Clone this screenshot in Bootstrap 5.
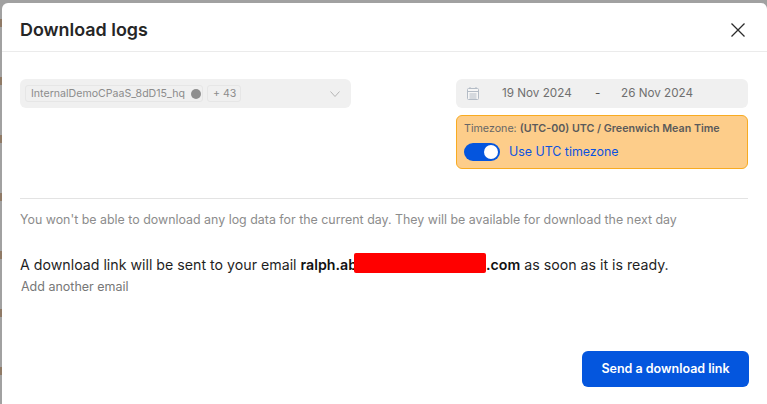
<!DOCTYPE html>
<html lang="en">
<head>
    <meta charset="UTF-8">
    <meta name="viewport" content="width=device-width, initial-scale=1.0">
    <title>Download logs</title>
    <link href="https://cdn.jsdelivr.net/npm/bootstrap@5.3.0/dist/css/bootstrap.min.css" rel="stylesheet">
    <style>
        html, body { height: 404px; overflow: hidden; }
        body { background: repeating-linear-gradient(180deg, #a1a1a1 0 19px, #8f7a66 19px 27px, #a1a1a1 27px 58px); font-family: Inter, "Liberation Sans", sans-serif; padding: 3px 0 0 2px; color: #1d1d1d; }
        .logs-modal { height: 401px; background: #fff; border: 0; border-radius: 6px 6px 0 0; }
        .logs-head { height: 49px; padding: 6px 21px 0 18px; border-bottom: 1px solid #ebebeb; }
        .logs-title { font-size: 17.9px; font-weight: 600; color: #262626; }
        .logs-close { padding: 0; border: 0; background: none; width: 16px; height: 16px; line-height: 0; }
        .logs-body { padding: 27px 18px 0; }
        .app-select { width: 331px; height: 29px; background: #f0f0f0; border-radius: 6px; padding: 0 11px 0 5px; }
        .app-chip { height: 17px; border: 1px solid #e6e6e6; border-radius: 3px; font-size: 10.6px; color: #8c8c8c; padding: 0 4px 0 5px; line-height: 15px; }
        .chip-x { width: 10px; height: 10px; border-radius: 50%; background: #8f8f8f; margin-left: 6px; margin-right: -3px; }
        .date-col { width: 292px; margin-right: 1px; }
        .date-box { height: 29px; background: #f0f0f0; border-radius: 6px; font-size: 11.7px; color: #6f6f6f; padding: 0 0 0 11px; }
        .date-from { margin-left: 23px; width: 93px; }
        .date-dash { width: 26px; color: #555; }
        .tz-box { height: 54px; margin-top: 7px; background: #fdcd8a; border: 1px solid #f8ab21; border-radius: 6px; padding: 5px 7px; font-size: 10.7px; color: #666; }
        .tz-box b { font-weight: 600; color: #5a5a5a; }
        .utc-row { margin-top: 6px; font-size: 12.4px; color: #0a53e0; gap: 9px; }
        .utc-toggle { width: 36px; height: 18px; background: #0455de; border-radius: 9px; padding: 2px; }
        .utc-knob { width: 14px; height: 14px; background: #fff; border-radius: 50%; margin-left: auto; }
        .logs-rule { margin: 29px 1px 0 0; border-top: 1px solid #e3e3e3; opacity: 1; }
        .logs-note { font-size: 12.42px; color: #8c8c8c; margin-top: 12px; }
        .logs-link-text { font-size: 14.2px; color: #1f1f1f; margin-top: 25px; line-height: 20px; white-space: nowrap; }
        .logs-link-text b { font-weight: 600; color: #111; }
        .redact { display: inline-block; width: 132px; height: 20px; background: #ff0000; border-radius: 2px; vertical-align: top; margin: -2px 0 0 -3px; }
        .add-email { font-size: 12.5px; color: #777; margin: 3px 0 0 1px; }
        .send-btn { height: 36px; width: 167px; background: #0456de; border: 0; border-radius: 6px; color: #fff; font-size: 12.5px; font-weight: 600; padding: 0; }
        .logs-foot { padding: 0 18px 17px 0; }
    </style>
</head>
<body>
    <div class="modal-content logs-modal d-flex flex-column">
        <div class="logs-head d-flex align-items-center justify-content-between">
            <div class="logs-title">Download logs</div>
            <button type="button" class="logs-close" aria-label="Close">
                <svg width="16" height="16" viewBox="0 0 16 16" fill="none" stroke="#2b2b2b" stroke-width="1.3"><path d="M1.500 1.500l13 13M14.500 1.500l-13 13"/></svg>
            </button>
        </div>
        <div class="logs-body flex-grow-1">
            <div class="d-flex justify-content-between align-items-start">
                <div class="app-select d-flex align-items-center">
                    <span class="app-chip d-flex align-items-center">InternalDemoCPaaS_8dD15_hq<span class="chip-x"></span></span>
                    <span class="app-chip ms-1">+ 43</span>
                    <svg class="ms-auto" width="10" height="6" viewBox="0 0 10 6" fill="none" stroke="#b5b5b5" stroke-width="1"><path d="M.5 .5l4.500 5 4.500-5"/></svg>
                </div>
                <div class="date-col">
                    <div class="date-box d-flex align-items-center">
                        <svg width="12" height="13" viewBox="0 0 12 13" fill="none" stroke="#b4bcc6"><rect x=".5" y="1.500" width="11" height="11" rx="1" fill="#f6f6f6"/><path d="M.5 4.500h11M3 0v2M9 0v2M2.500 7h7M2.500 9h7M2.500 11h7"/></svg>
                        <span class="date-from">19 Nov 2024</span>
                        <span class="date-dash">-</span>
                        <span>26 Nov 2024</span>
                    </div>
                    <div class="tz-box">
                        <div>Timezone: <b>(UTC-00) UTC / Greenwich Mean Time</b></div>
                        <div class="utc-row d-flex align-items-center">
                            <span class="utc-toggle d-flex"><span class="utc-knob"></span></span>
                            <span>Use UTC timezone</span>
                        </div>
                    </div>
                </div>
            </div>
            <hr class="logs-rule">
            <div class="logs-note">You won't be able to download any log data for the current day. They will be available for download the next day</div>
            <div class="logs-link-text">A download link will be sent to your email <b>ralph.ab<span class="redact"></span>.com</b> as soon as it is ready.</div>
            <div class="add-email">Add another email</div>
        </div>
        <div class="logs-foot d-flex justify-content-end">
            <button type="button" class="btn send-btn">Send a download link</button>
        </div>
    </div>
    <script src="https://cdn.jsdelivr.net/npm/bootstrap@5.3.0/dist/js/bootstrap.bundle.min.js"></script>
</body>
</html>
